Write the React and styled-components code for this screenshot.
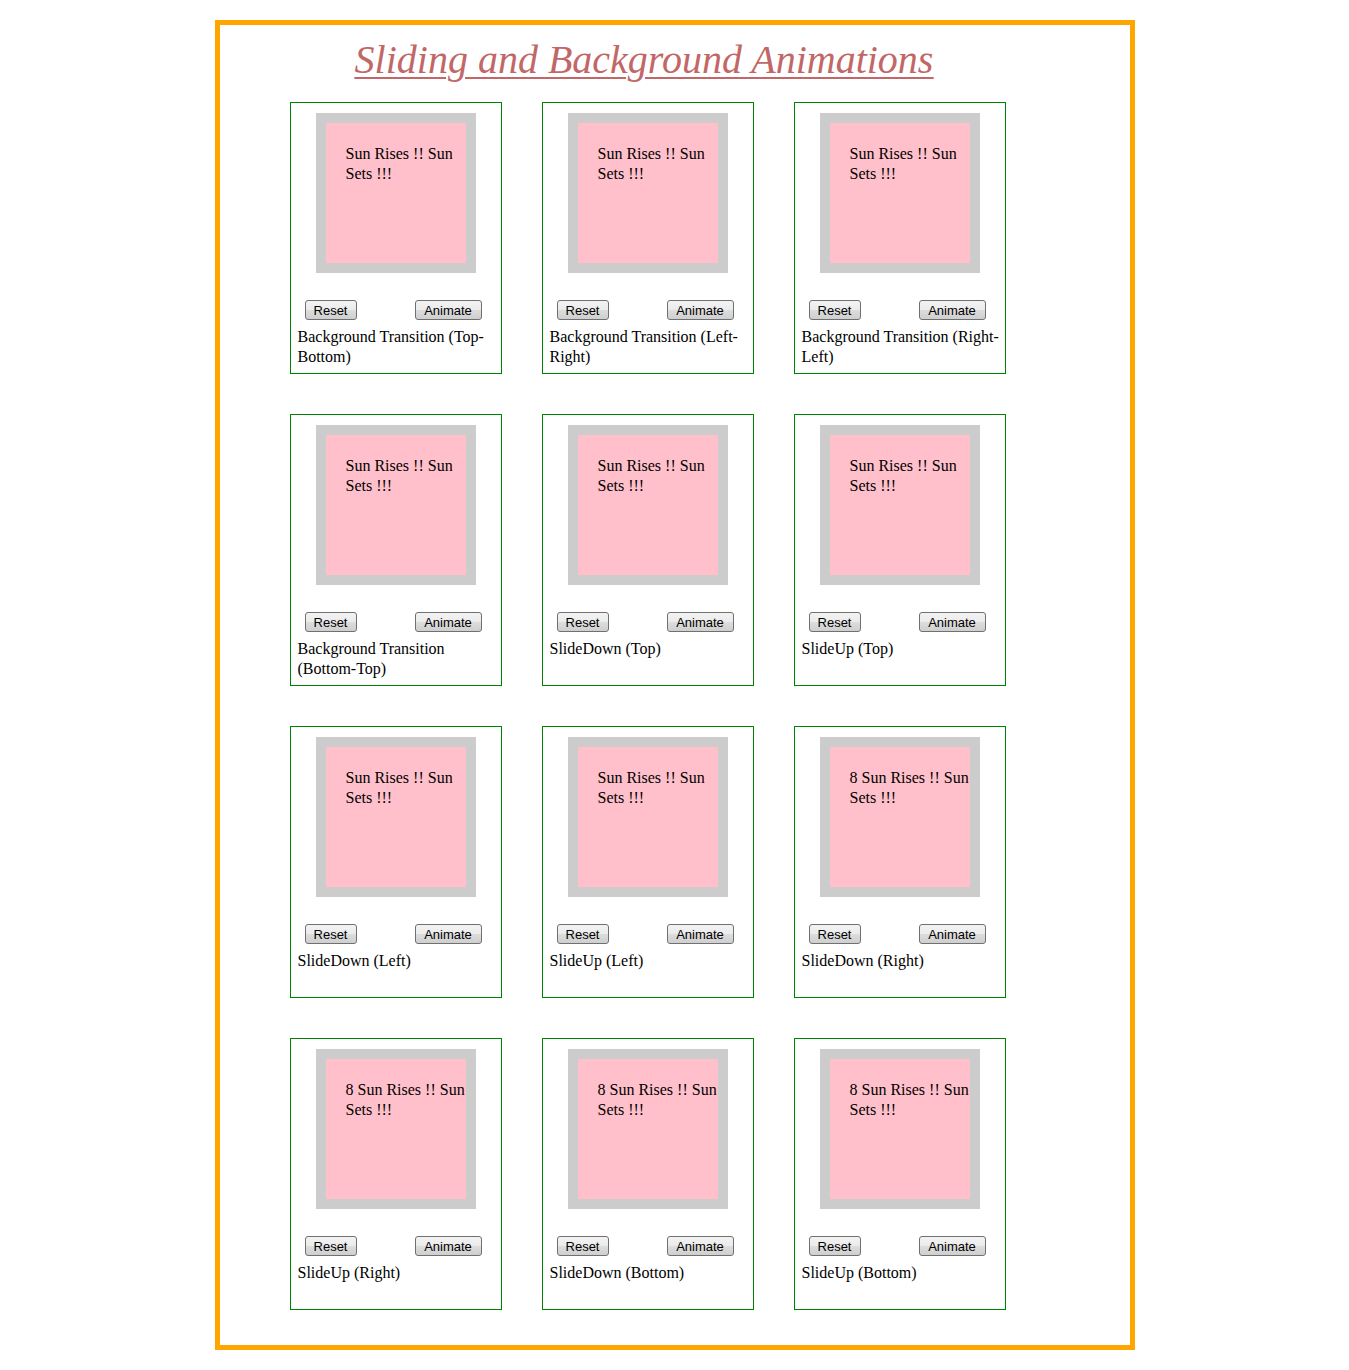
import React from "react";
import styled, { createGlobalStyle } from "styled-components";

const Global = createGlobalStyle`
  html, body { margin: 0; padding: 0; background: #fff; }
  body { font-family: "Liberation Serif", "Times New Roman", serif; }
`;

const Frame = styled.div`
  width: 910px;
  margin: 20px auto 0;
  border: 5px solid #ffa500;
  padding: 0 0 35px;
  box-sizing: content-box;
`;

const Title = styled.h1`
  margin: 0;
  padding: 12px 61px 0 0;
  height: 65px;
  box-sizing: content-box;
  text-align: center;
  font-family: "Liberation Serif", "Times New Roman", serif;
  font-style: italic;
  font-weight: normal;
  font-size: 40px;
  line-height: 46px;
  color: #c26767;
  text-decoration: underline;
  text-decoration-thickness: 2px;
  text-underline-offset: 4px;
  span { text-decoration: inherit; }
`;

const Grid = styled.div`
  display: grid;
  grid-template-columns: repeat(3, 212px);
  column-gap: 40px;
  row-gap: 40px;
  padding-left: 70px;
`;

const Card = styled.div`
  box-sizing: border-box;
  width: 212px;
  height: 272px;
  border: 1px solid #008000;
  display: flex;
  flex-direction: column;
`;

const Stage = styled.div`
  width: 140px;
  height: 140px;
  border: 10px solid #cccccc;
  margin: 10px auto 0;
  overflow: hidden;
`;

const Sun = styled.div`
  box-sizing: border-box;
  width: 140px;
  height: 140px;
  padding: 21px 0 0 20px;
  background: #ffc0cb;
  font-size: 16px;
  line-height: 20px;
  color: #000;
`;

const Buttons = styled.div`
  display: flex;
  justify-content: space-between;
  margin-top: 27px;
  padding: 0 19px 0 14px;
`;

const Button = styled.button`
  box-sizing: border-box;
  height: 20px;
  padding: 1px 0 0;
  width: ${(p) => (p.$wide ? 67 : 52)}px;
  font-family: "Liberation Sans", Arial, sans-serif;
  font-size: 13px;
  line-height: 17px;
  color: #000;
  border: 1px solid #707070;
  border-radius: 3px;
  background: linear-gradient(#f3f3f3, #ebebeb 50%, #dddddd 50%, #cfcfcf);
  cursor: pointer;
`;

const Caption = styled.div`
  margin-top: 7px;
  padding: 0 4px 0 7px;
  font-size: 16px;
  line-height: 20px;
  color: #000;
`;

const cards = [
  ["Background Transition (Top-Bottom)", "Sun Rises !! Sun Sets !!!"],
  ["Background Transition (Left-Right)", "Sun Rises !! Sun Sets !!!"],
  ["Background Transition (Right-Left)", "Sun Rises !! Sun Sets !!!"],
  ["Background Transition (Bottom-Top)", "Sun Rises !! Sun Sets !!!"],
  ["SlideDown (Top)", "Sun Rises !! Sun Sets !!!"],
  ["SlideUp (Top)", "Sun Rises !! Sun Sets !!!"],
  ["SlideDown (Left)", "Sun Rises !! Sun Sets !!!"],
  ["SlideUp (Left)", "Sun Rises !! Sun Sets !!!"],
  ["SlideDown (Right)", "8 Sun Rises !! Sun Sets !!!"],
  ["SlideUp (Right)", "8 Sun Rises !! Sun Sets !!!"],
  ["SlideDown (Bottom)", "8 Sun Rises !! Sun Sets !!!"],
  ["SlideUp (Bottom)", "8 Sun Rises !! Sun Sets !!!"],
];

export default function App() {
  return (
    <>
      <Global />
      <Frame>
        <Title>
          <span>Sliding and Background Animations</span>
        </Title>
        <Grid>
          {cards.map(([label, text], i) => (
            <Card key={i}>
              <Stage>
                <Sun>{text}</Sun>
              </Stage>
              <Buttons>
                <Button>Reset</Button>
                <Button $wide>Animate</Button>
              </Buttons>
              <Caption>{label}</Caption>
            </Card>
          ))}
        </Grid>
      </Frame>
    </>
  );
}
